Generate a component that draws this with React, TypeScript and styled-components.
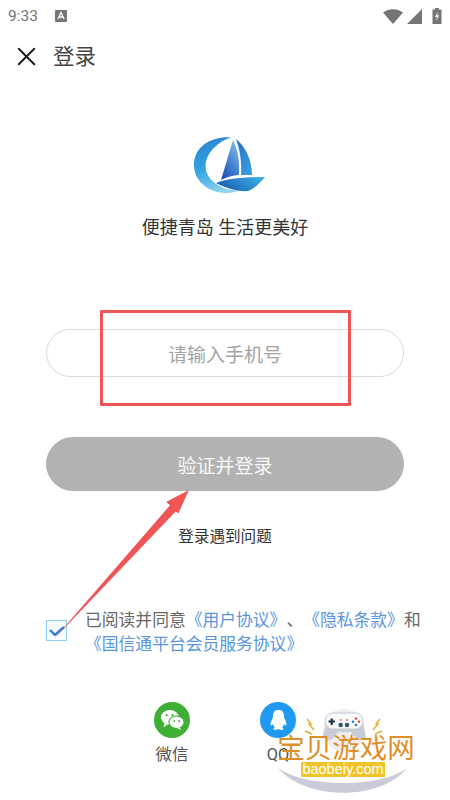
import React from "react";
import styled, { createGlobalStyle } from "styled-components";
import { X } from "lucide-react";

const FONT = `"Roboto", "Noto Sans CJK SC", sans-serif`;

const GlobalStyle = createGlobalStyle`
  html, body {
    margin: 0;
    padding: 0;
    background: #fff;
  }
  * {
    box-sizing: border-box;
  }
`;

const Page = styled.div`
  position: relative;
  width: 450px;
  height: 800px;
  overflow: hidden;
  background: #fff;
  font-family: ${FONT};
  color: #444;
`;

const StatusBar = styled.div`
  display: flex;
  align-items: center;
  justify-content: space-between;
  height: 30px;
  padding: 2px 8px 0 8px;
  color: #757575;
`;

const StatusLeft = styled.div`
  display: flex;
  align-items: center;
  gap: 17px;
  font-size: 15.5px;
`;

const StatusRight = styled.div`
  display: flex;
  align-items: center;
  gap: 4px;
`;

const BatteryIcon = styled.svg`
  margin-left: 6px;
`;

const Header = styled.header`
  display: flex;
  align-items: center;
  height: 52px;
  padding-left: 11px;
  gap: 11px;
  margin-bottom: 55px;
`;

const Title = styled.h1`
  margin: 0;
  padding-bottom: 4px;
  font-size: 21.5px;
  font-weight: 400;
  color: #444;
`;

const Brand = styled.section`
  display: flex;
  flex-direction: column;
  align-items: center;
  gap: 22px;
  margin-bottom: 88px;
`;

const LogoMark = styled.svg`
  margin-left: 9px;
`;

const Tagline = styled.div`
  font-size: 18px;
  line-height: 26px;
  color: #333;
`;

const Form = styled.section`
  display: flex;
  flex-direction: column;
  padding: 0 46px;
`;

const PhoneField = styled.div`
  display: flex;
  align-items: center;
  justify-content: center;
  height: 48px;
  border: 1.5px solid #d9d9d9;
  border-radius: 24px;
  font-size: 19px;
  color: #a3a3a3;
  margin-bottom: 60px;
`;

const SubmitButton = styled.button`
  height: 54px;
  border: 0;
  border-radius: 27px;
  background: #b2b2b2;
  color: #f7f7f7;
  font-family: ${FONT};
  font-size: 19px;
  margin-bottom: 33px;
`;

const HelpLink = styled.div`
  text-align: center;
  font-size: 15.6px;
  line-height: 26px;
  color: #333;
  margin-bottom: 58px;
`;

const Agreement = styled.section`
  display: flex;
  align-items: flex-start;
  padding-left: 46px;
  margin-bottom: 46px;
`;

const CheckBox = styled.div`
  flex: none;
  width: 21px;
  height: 21px;
  margin: 12px 18px 0 0;
  border: 1.5px solid #8fd0f2;
  background: #f6fcff;
  display: flex;
  align-items: center;
  justify-content: center;
`;

const AgreementText = styled.div`
  font-size: 16.8px;
  line-height: 24px;
  color: #666;
  white-space: nowrap;
  text-spacing-trim: space-all;
  font-kerning: none;
`;

const Link = styled.span`
  color: #5a95dc;
`;

const Socials = styled.section`
  display: flex;
  justify-content: flex-start;
  padding-left: 154px;
  gap: 70px;
`;

const Social = styled.div`
  display: flex;
  flex-direction: column;
  align-items: center;
  width: 36px;
  gap: 6px;
  font-size: 16.4px;
  line-height: 22px;
  color: #555;
  white-space: nowrap;
`;

const SocialIcon = styled.div<{ $color: string }>`
  display: flex;
  align-items: center;
  justify-content: center;
  width: 36px;
  height: 36px;
  border-radius: 50%;
  background: ${(p) => p.$color};
`;

// 截图上的标注和水印
const Mark = styled.div`
  position: absolute;
  left: 100px;
  top: 310px;
  width: 251px;
  height: 96px;
  border: 3px solid #f05555;
  border-radius: 1px;
`;

const ArrowLayer = styled.svg`
  position: absolute;
  left: 0;
  top: 0;
  pointer-events: none;
`;

const Watermark = styled.div`
  position: absolute;
  left: 276px;
  top: 706px;
  width: 140px;
  height: 92px;
`;

const WatermarkArt = styled.svg`
  position: absolute;
  left: 0;
  top: 0;
`;

const WatermarkTitle = styled.div`
  position: absolute;
  left: 0;
  top: 26px;
  width: 140px;
  text-align: center;
  font-size: 27.5px;
  line-height: 34px;
  color: #e08f28;
  white-space: nowrap;
`;

const WatermarkUrl = styled.div`
  position: absolute;
  left: 25px;
  top: 56px;
  width: 84px;
  height: 15px;
  background: #f0c428;
  color: #fff;
  font-family: "Liberation Sans", sans-serif;
  font-size: 14.5px;
  line-height: 15px;
  text-align: center;
  white-space: nowrap;
`;

const Logo = () => (
  <LogoMark width="72" height="56" viewBox="0 0 72 56">
    <defs>
      <linearGradient id="ring" x1="0.3" y1="0" x2="0.6" y2="1">
        <stop offset="0" stopColor="#2a86d2" />
        <stop offset="0.5" stopColor="#33a4e2" />
        <stop offset="1" stopColor="#8fd6f0" />
      </linearGradient>
      <linearGradient id="sailLeft" x1="0.8" y1="0" x2="0.2" y2="1">
        <stop offset="0" stopColor="#7cc0ec" />
        <stop offset="1" stopColor="#1c4fb4" />
      </linearGradient>
      <linearGradient id="sailRight" x1="0" y1="0" x2="0.6" y2="1">
        <stop offset="0" stopColor="#1f6ec6" />
        <stop offset="1" stopColor="#3a9ae0" />
      </linearGradient>
      <linearGradient id="hull" x1="0" y1="0.6" x2="1" y2="0.2">
        <stop offset="0" stopColor="#1a5cb6" />
        <stop offset="1" stopColor="#3cb0e4" />
      </linearGradient>
    </defs>
    <path d="M37 0.500C20 -1 0 8 0 28C0 46 17 56 32 56C37 56 42 55 46 53.500C34 54 18 49 12.500 35C8 20 22 5 37 0.500Z" fill="url(#ring)" />
    <path d="M39 3L27 43C33 40 39 38.500 45 38C46 26 44 13 39 3Z" fill="url(#sailLeft)" />
    <path d="M42 2C52 10 58 24 58 38L47 38C48 26 46 13 42 2Z" fill="url(#sailRight)" />
    <path d="M22 46C35 41 55 40 71 40C66 46 60 52 54 54C44 55 32 51 22 46Z" fill="url(#hull)" />
  </LogoMark>
);

const WechatGlyph = () => (
  <svg width="25" height="22" viewBox="0 0 28 24">
    <ellipse cx="11" cy="9" rx="10" ry="8.200" fill="#fff" />
    <path d="M5 15L4 20L10 16Z" fill="#fff" />
    <ellipse cx="18.500" cy="14.500" rx="8.500" ry="7" fill="#fff" stroke="#3fae35" strokeWidth="1.200" />
    <path d="M22 20L24 23.500L19 21Z" fill="#fff" />
    <circle cx="7.500" cy="6.500" r="1.300" fill="#3fae35" />
    <circle cx="14" cy="6.500" r="1.300" fill="#3fae35" />
    <circle cx="16" cy="13" r="1.100" fill="#3fae35" />
    <circle cx="21.500" cy="13" r="1.100" fill="#3fae35" />
  </svg>
);

const QQGlyph = () => (
  <svg width="19" height="24" viewBox="0 0 24 28">
    <path
      d="M12 1C6.500 1 5 5.500 5 9.500C5 11 4.600 12 3.500 14C2 17 1.500 20 2.500 21C3.200 21.500 4.500 20 5 19C5.500 21 6.500 22.500 7.500 23.500C5.500 24.500 5 25.500 6 26C8 27 10.500 26.500 12 25.500C13.500 26.500 16 27 18 26C19 25.500 18.500 24.500 16.500 23.500C17.500 22.500 18.500 21 19 19C19.500 20 20.800 21.500 21.500 21C22.500 20 22 17 20.500 14C19.400 12 19 11 19 9.500C19 5.500 17.500 1 12 1Z"
      fill="#fff"
    />
  </svg>
);

export default function App() {
  return (
    <Page>
      <GlobalStyle />
      <StatusBar>
        <StatusLeft>
          <span>9:33</span>
          <svg width="12" height="12" viewBox="0 0 12 12">
            <rect width="12" height="12" rx="1" fill="#757575" />
            <path d="M3 9L6 2.500L9 9M4.200 7H7.800" stroke="#fff" strokeWidth="1.300" fill="none" />
          </svg>
        </StatusLeft>
        <StatusRight>
          <svg width="20" height="15" viewBox="0 0 20 15">
            <path d="M0 3.500C5.500 -1 14.500 -1 20 3.500L10 15Z" fill="#757575" />
          </svg>
          <svg width="15" height="15" viewBox="0 0 15 15">
            <path d="M15 0V15H0Z" fill="#757575" />
          </svg>
          <BatteryIcon width="10" height="16" viewBox="0 0 10 16">
            <path d="M3 0H7V1.500H9.500V16H0.500V1.500H3Z" fill="#757575" />
            <path d="M5.800 3.500L3 9H5L4.200 13L7.200 7.200H5.200Z" fill="#fff" />
          </BatteryIcon>
        </StatusRight>
      </StatusBar>

      <Header>
        <X size={31} strokeWidth={1.5} color="#1c1c1c" />
        <Title>登录</Title>
      </Header>

      <Brand>
        <Logo />
        <Tagline>便捷青岛 生活更美好</Tagline>
      </Brand>

      <Form>
        <PhoneField>请输入手机号</PhoneField>
        <SubmitButton>验证并登录</SubmitButton>
        <HelpLink>登录遇到问题</HelpLink>
      </Form>

      <Agreement>
        <CheckBox>
          <svg width="16" height="10" viewBox="0 0 16 10">
            <path d="M1 4L6 9L15 1" stroke="#2f7fd0" strokeWidth="2.400" fill="none" />
          </svg>
        </CheckBox>
        <AgreementText>
          <div>
            已阅读并同意<Link>《用户协议》</Link>、<Link>《隐私条款》</Link>和
          </div>
          <div>
            <Link>《国信通平台会员服务协议》</Link>
          </div>
        </AgreementText>
      </Agreement>

      <Socials>
        <Social>
          <SocialIcon $color="#3fae35">
            <WechatGlyph />
          </SocialIcon>
          微信
        </Social>
        <Social>
          <SocialIcon $color="#1f9af0">
            <QQGlyph />
          </SocialIcon>
          QQ
        </Social>
      </Socials>

      <Mark />
      <ArrowLayer width="450" height="800" viewBox="0 0 450 800">
        <path d="M54 639L172 503L178 509Z" fill="#f05555" />
        <path d="M188 491L167 502L178 513Z" fill="#f05555" stroke="#f05555" strokeWidth="1" strokeLinejoin="round" />
      </ArrowLayer>

      <Watermark>
        <WatermarkArt width="140" height="92" viewBox="0 0 140 92">
          <path d="M2 62C30 95 105 95 131 62C105 82 30 82 2 62Z" fill="#c9ccd8" />
          <circle cx="68" cy="24" r="21" fill="#eeeef1" />
          <path d="M50 18L47 30Q50 36 56 33L62 26H75L81 33Q87 36 90 30L87 18Z" fill="#c8ccd6" />
          <rect x="49" y="7" width="38" height="16" rx="7.500" fill="#f8f9fb" stroke="#c4c8d2" />
          <path d="M52.500 15.500H59M55.700 12.500V19" stroke="#1f3442" strokeWidth="2.200" />
          <circle cx="64.700" cy="19" r="2.300" fill="#33566b" />
          <circle cx="71" cy="19" r="2.300" fill="#33566b" />
          <circle cx="64.700" cy="14" r="1" fill="#e0685f" />
          <circle cx="71" cy="14" r="1" fill="#e0685f" />
          <circle cx="80" cy="12.500" r="1.300" fill="#e04a3f" />
          <circle cx="77" cy="15.700" r="1.300" fill="#2b7fd0" />
          <circle cx="83" cy="15.700" r="1.300" fill="#e04a3f" />
          <circle cx="80" cy="19" r="1.300" fill="#2b7fd0" />
          <path d="M31 13L35 18L33 18L38 24" stroke="#e5b035" strokeWidth="1.500" fill="none" />
          <path d="M29 25L36 28" stroke="#e5b035" strokeWidth="1.500" fill="none" />
          <path d="M104 13L100 18L102 18L97 24" stroke="#e5b035" strokeWidth="1.500" fill="none" />
          <path d="M106 25L99 28" stroke="#e5b035" strokeWidth="1.500" fill="none" />
        </WatermarkArt>
        <WatermarkTitle>宝贝游戏网</WatermarkTitle>
        <WatermarkUrl>baobeiy.com</WatermarkUrl>
      </Watermark>
    </Page>
  );
}
